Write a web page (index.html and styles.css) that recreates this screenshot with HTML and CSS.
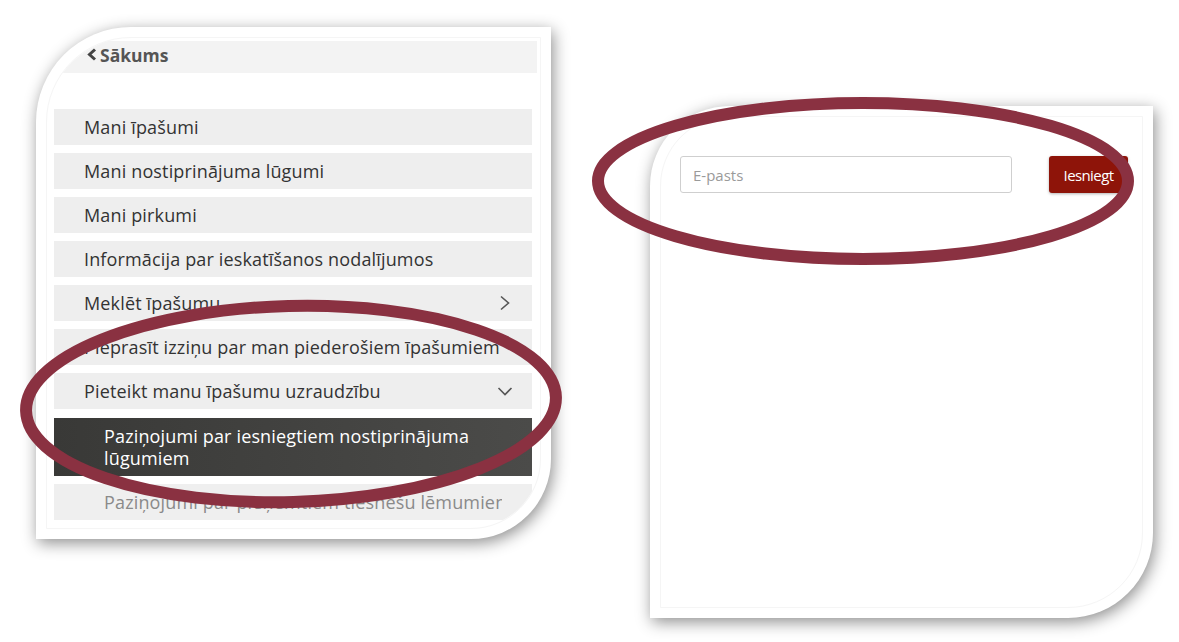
FILE: index.html
```html
<!DOCTYPE html>
<html lang="lv">
<head>
    <meta charset="UTF-8">
    <meta name="viewport" content="width=device-width, initial-scale=1.0">
    <title>Īpašumu uzraudzība</title>
    <link rel="stylesheet" href="styles.css">
</head>
<body>

<div class="page">
    <div class="panel panel-menu">
        <div class="frame">
            <div class="home-row">
                <svg class="back-icon" width="11" height="13" viewBox="0 0 11 13"><path d="M9 1.5 L3.5 6.5 L9 11.5" fill="none" stroke="#444" stroke-width="3"/></svg>
                <span>Sākums</span>
            </div>
            <div class="menu">
                <div class="item"><span class="item-text">Mani īpašumi</span></div>
                <div class="item"><span class="item-text">Mani nostiprinājuma lūgumi</span></div>
                <div class="item"><span class="item-text">Mani pirkumi</span></div>
                <div class="item"><span class="item-text">Informācija par ieskatīšanos nodalījumos</span></div>
                <div class="item">
                    <span class="item-text">Meklēt īpašumu</span>
                    <svg class="chevron-right" width="12" height="16" viewBox="0 0 12 16"><path d="M2 1.5 L9.5 8 L2 14.5" fill="none" stroke="#555" stroke-width="1.6"/></svg>
                </div>
                <div class="item"><span class="item-text">Pieprasīt izziņu par man piederošiem īpašumiem</span></div>
                <div class="item">
                    <span class="item-text">Pieteikt manu īpašumu uzraudzību</span>
                    <svg class="chevron-down" width="16" height="10" viewBox="0 0 16 10"><path d="M1.5 2 L8 8.5 L14.5 2" fill="none" stroke="#555" stroke-width="1.6"/></svg>
                </div>
                <div class="item sub active"><span class="item-text">Paziņojumi par iesniegtiem nostiprinājuma lūgumiem</span></div>
                <div class="item sub muted"><span class="item-text">Paziņojumi par pieņemtiem tiesnešu lēmumiem</span></div>
            </div>
        </div>
    </div>

    <div class="panel panel-form">
        <div class="frame">
            <div class="subscribe">
                <input type="text" class="email" placeholder="E-pasts">
                <button class="submit">Iesniegt</button>
            </div>
        </div>
    </div>

    <svg class="marks" width="1179" height="642" viewBox="0 0 1179 642">
        <ellipse cx="863" cy="181" rx="265" ry="78" fill="none" stroke="#8a3141" stroke-width="12"/>
        <ellipse cx="291" cy="404" rx="265" ry="98" fill="none" stroke="#8a3141" stroke-width="12" transform="rotate(-1.5 291 404)"/>
    </svg>
</div>

</body>
</html>
```

FILE: styles.css
```css
body {
    margin: 0;
    background-color: #fff;
    font-family: 'Open Sans', 'Liberation Sans', sans-serif;
    color: #333;
}

.page {
    position: relative;
    width: 1179px;
    height: 642px;
    box-sizing: border-box;
    padding: 27px 0 0 36px;
    display: flex;
    align-items: flex-start;
    gap: 99px;
    overflow: hidden;
}

.panel {
    background-color: #fff;
    padding: 10px;
    box-sizing: border-box;
    box-shadow: 2px 4px 16px rgba(0, 0, 0, 0.45);
}

.frame {
    height: 100%;
    box-sizing: border-box;
    border: 1px solid #f5f5f5;
    overflow: hidden;
}

.panel-menu {
    width: 515px;
    height: 512px;
    border-radius: 95px 0 80px 0;
}

.panel-menu .frame {
    border-radius: 85px 0 70px 0;
}

.panel-form {
    width: 503px;
    height: 512px;
    margin-top: 79px;
    border-radius: 80px 0 85px 0;
}

.panel-form .frame {
    border-radius: 70px 0 75px 0;
}

/* left menu */
.home-row {
    display: flex;
    align-items: center;
    height: 32px;
    margin: 3px 3px 0 0;
    padding: 0 0 5px 39px;
    box-sizing: border-box;
    background-color: #f3f3f3;
    font-size: 17.5px;
    font-weight: bold;
    color: #555;
}

.back-icon {
    margin-right: 3px;
}

.menu {
    display: flex;
    flex-direction: column;
    gap: 8px;
    margin-top: 36px;
    padding: 0 8px 0 7px;
}

.item {
    display: flex;
    align-items: center;
    height: 36px;
    padding: 0 21px 0 30px;
    background-color: #eeeeee;
    font-size: 18px;
    letter-spacing: 0.15px;
    color: #333;
}

.item-text {
    flex: 1;
    min-width: 0;
    overflow: hidden;
    white-space: nowrap;
    margin-right: 9px;
}

.chevron-down {
    margin-right: -2px;
}

.item.sub {
    padding-left: 50px;
}

.item.active {
    height: 58px;
    margin-top: 1px;
    background: linear-gradient(90deg, #393937, #4b4b49);
    color: #fff;
    line-height: 22px;
}

.item.active .item-text {
    white-space: normal;
}

.item.muted {
    color: #8a8a8a;
    background-color: #efefef;
}

/* right form */
.subscribe {
    display: flex;
    align-items: center;
    padding: 39px 0 0 19px;
    gap: 37px;
}

.email {
    width: 332px;
    height: 37px;
    box-sizing: border-box;
    border: 1px solid #cfcfcf;
    border-radius: 3px;
    padding: 0 12px;
    font-family: 'Open Sans', sans-serif;
    font-size: 15px;
    color: #333;
}

.email::placeholder {
    color: #9a9a9a;
}

.submit {
    width: 79px;
    height: 37px;
    border: none;
    border-radius: 3px;
    background-color: #8e1409;
    color: #fff;
    font-family: 'Open Sans', sans-serif;
    font-size: 15px;
    letter-spacing: -0.6px;
    padding: 0;
    box-shadow: 0 1px 3px rgba(0, 0, 0, 0.3);
}

.marks {
    position: absolute;
    top: 0;
    left: 0;
    pointer-events: none;
}
```
